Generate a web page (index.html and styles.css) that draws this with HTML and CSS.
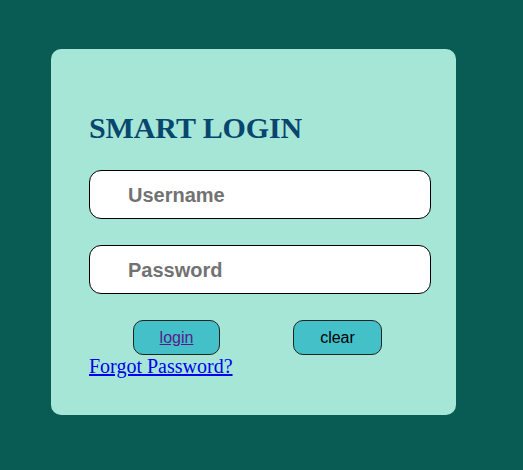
FILE: index.html
```
<!DOCTYPE html>
<html>
<head>
<meta charset="utf-8">
<link rel="stylesheet" href="styles.css">
</head>
<body>
<div class="card">
  <h2 class="title">SMART LOGIN</h2>
  <input class="field" type="text" placeholder="Username">
  <input class="field" type="password" placeholder="Password">
  <div class="actions">
    <button class="btn btn-login"><a class="login-link" href="#">login</a></button>
    <button class="btn btn-clear">clear</button>
  </div>
  <a class="forgot" href="#">Forgot Password?</a>
</div>
</body>
</html>
```
FILE: styles.css
```
html, body {
  margin: 0;
  padding: 0;
}
body {
  background: #095c53;
  min-height: 470px;
  padding-top: 49px;
  padding-left: 51px;
  box-sizing: border-box;
  font-family: "Liberation Serif", serif;
}
.card {
  width: 405px;
  box-sizing: border-box;
  background: #a6e6d7;
  border-radius: 10px;
  padding: 60px 25px 37px 38px;
  display: flex;
  flex-direction: column;
  align-items: flex-start;
}
.title {
  margin: 0 0 -2px;
  font-family: "Liberation Serif", serif;
  font-size: 30px;
  font-weight: bold;
  color: #07466e;
  line-height: 37px;
  letter-spacing: -0.1px;
}
.field {
  width: 342px;
  height: 49px;
  box-sizing: border-box;
  border: 1px solid #000;
  border-radius: 12px;
  background: #fff;
  padding: 2px 0 0 38px;
  font-family: "Liberation Sans", sans-serif;
  font-size: 20px;
  font-weight: bold;
  outline: none;
  margin-top: 26px;
}
.field::placeholder {
  color: #727272;
  opacity: 1;
}
.actions {
  display: flex;
  gap: 73px;
  padding-left: 44px;
  margin-top: 26px;
}
.btn {
  height: 35px;
  box-sizing: border-box;
  border: 1px solid #222;
  border-radius: 10px;
  background: #44c0c9;
  font-family: "Liberation Sans", sans-serif;
  font-size: 16px;
  color: #000;
  padding: 0;
  display: flex;
  align-items: center;
  justify-content: center;
}
.btn-login {
  width: 87px;
}
.btn-clear {
  width: 89px;
}
.login-link {
  color: #551a8b;
  text-decoration: underline;
}
.forgot {
  font-family: "Liberation Serif", serif;
  font-size: 20px;
  line-height: 23px;
  color: #0000ee;
  text-decoration: underline;
}
```
